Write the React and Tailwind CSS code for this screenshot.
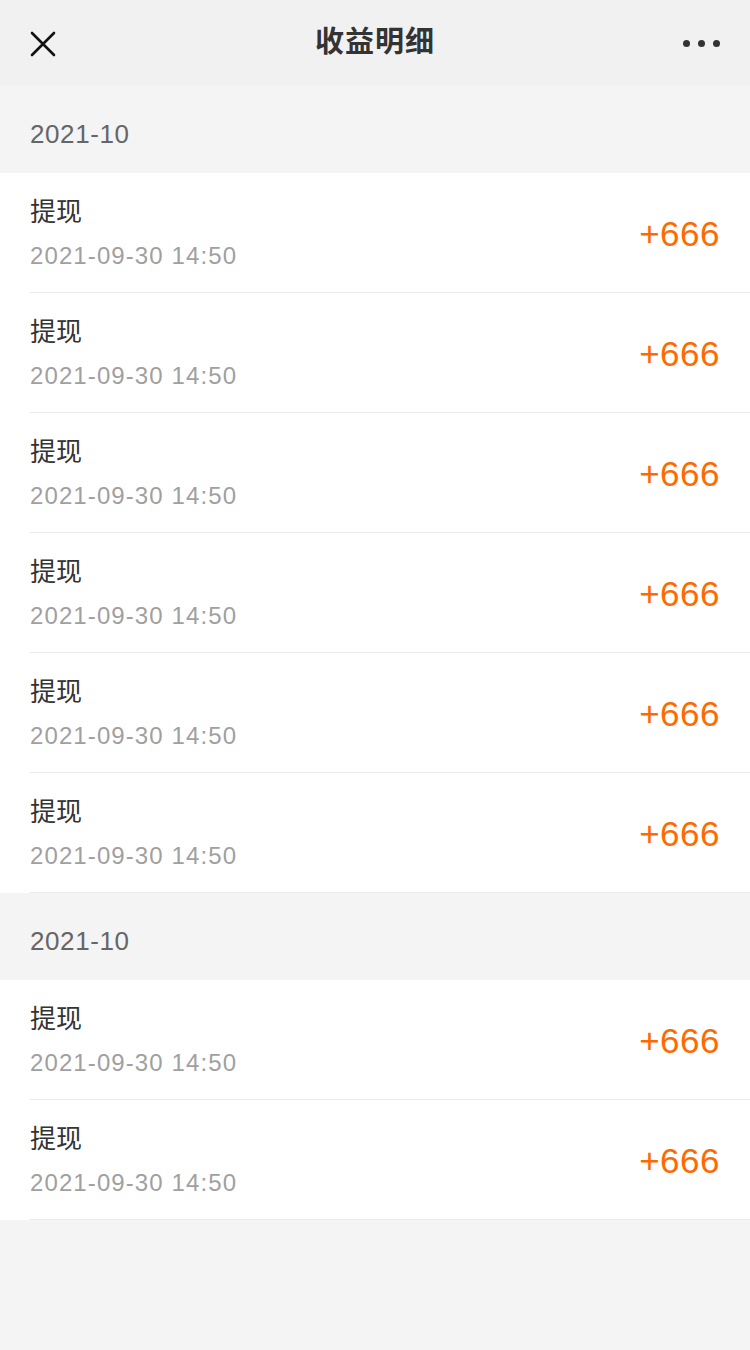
import React from 'react';

const groups = [
  { month: '2021-10', items: Array(6).fill({ title: '提现', time: '2021-09-30 14:50', amount: '+666' }) },
  { month: '2021-10', items: Array(2).fill({ title: '提现', time: '2021-09-30 14:50', amount: '+666' }) },
];

const Row = ({ item }) => (
  <div className="pl-[30px]">
    <div className="h-[120px] flex items-center justify-between pr-[30px] border-b border-[#ebebeb]">
      <div className="flex flex-col">
        <span className="text-[26px] leading-[36px] text-[#333]">{item.title}</span>
        <span className="text-[24px] leading-[32px] text-[#a0a0a0] mt-[10px] tracking-[1.1px]">{item.time}</span>
      </div>
      <span className="text-[35px] leading-[40px] text-[#ff6a00] mt-[2px] tracking-[0.5px]">{item.amount}</span>
    </div>
  </div>
);

export default function App() {
  return (
    <div className="min-h-[1350px] bg-[#f4f4f4] font-['Helvetica','Liberation_Sans','Noto_Sans_CJK_SC',sans-serif]">
      <div className="h-[86px] bg-[#f1f1f1] grid grid-cols-[1fr_auto_1fr] items-center px-[30px]">
        <svg width="26" height="26" viewBox="0 0 26 26" className="mt-[2px]">
          <path d="M2 2 L24 24 M24 2 L2 24" stroke="#111" strokeWidth="2.6" strokeLinecap="round" />
        </svg>
        <span className="text-[29px] font-bold text-[#333] tracking-[1px]">收益明细</span>
        <div className="flex gap-[8px] justify-end">
          <span className="w-[7px] h-[7px] rounded-full bg-[#333]" />
          <span className="w-[7px] h-[7px] rounded-full bg-[#333]" />
          <span className="w-[7px] h-[7px] rounded-full bg-[#333]" />
        </div>
      </div>
      {groups.map((g, gi) => (
        <div key={gi}>
          <div className="h-[87px] flex items-center pt-[10px] px-[30px] text-[26px] text-[#666] tracking-[0.6px]">{g.month}</div>
          <div className="bg-white">
            {g.items.map((it, i) => (
              <Row key={i} item={it} />
            ))}
          </div>
        </div>
      ))}
    </div>
  );
}
